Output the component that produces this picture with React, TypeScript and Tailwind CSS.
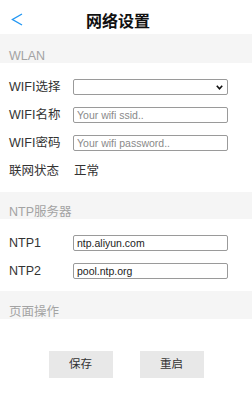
import React from "react";

const FONT = { fontFamily: '"Liberation Sans", "Noto Sans CJK SC", sans-serif' };

function Band({ title, h }: { title: string; h: string }) {
  return (
    <div className={`${h} bg-[#f5f5f5] flex items-end px-[9px]`}>
      <span className="text-[12.5px] leading-[13px] text-[#a3a3a3]">{title}</span>
    </div>
  );
}

function Row({ label, children }: { label: string; children: React.ReactNode }) {
  return (
    <div className="h-[28px] flex items-center pl-[9px]">
      <div className="w-[64px] text-[12.5px] text-[#333]">{label}</div>
      {children}
    </div>
  );
}

function Input({ placeholder, value }: { placeholder?: string; value?: string }) {
  return (
    <input
      className="w-[155px] h-[16px] border border-[#9a9a9a] rounded-[2px] px-[3px] text-[10.5px] text-[#222] placeholder:text-[#8a8a8a] outline-none bg-white"
      style={FONT}
      placeholder={placeholder}
      defaultValue={value}
    />
  );
}

export default function App() {
  return (
    <div className="w-[252px] h-[405px] bg-white" style={FONT}>
      <div className="h-[34px] flex items-start">
        <svg className="ml-[11px] mt-[13px]" width="12" height="13" viewBox="0 0 12 13">
          <polyline points="11,1 1.5,6.5 11,12" fill="none" stroke="#2196f3" strokeWidth="1.4" />
        </svg>
        <div className="ml-[63px] mt-[13px] text-[16px] leading-[18px] font-bold text-[#111]">网络设置</div>
      </div>
      <Band title="WLAN" h="h-[29px]" />
      <div className="pt-[10px] pb-[7px]">
        <Row label="WIFI选择">
          <div className="relative w-[155px] h-[16px] border border-[#9a9a9a] rounded-[2px] bg-white">
            <svg className="absolute right-[4px] top-[5px]" width="7" height="5" viewBox="0 0 7 5">
              <polyline points="0.8,0.8 3.5,3.8 6.2,0.8" fill="none" stroke="#111" strokeWidth="1.6" />
            </svg>
          </div>
        </Row>
        <Row label="WIFI名称">
          <Input placeholder="Your wifi ssid.." />
        </Row>
        <Row label="WIFI密码">
          <Input placeholder="Your wifi password.." />
        </Row>
        <Row label="联网状态">
          <span className="text-[12.5px] text-[#333] ml-[1px]">正常</span>
        </Row>
      </div>
      <Band title="NTP服务器" h="h-[27px]" />
      <div className="pt-[10px] pb-[6px]">
        <Row label="NTP1">
          <Input value="ntp.aliyun.com" />
        </Row>
        <Row label="NTP2">
          <Input value="pool.ntp.org" />
        </Row>
      </div>
      <Band title="页面操作" h="h-[28px]" />
      <div className="mt-[32px] flex justify-center gap-[27px]">
        <button className="w-[64px] h-[27px] bg-[#e8e8e8] text-[11.5px] text-[#333]">保存</button>
        <button className="w-[64px] h-[27px] bg-[#e8e8e8] text-[11.5px] text-[#333]">重启</button>
      </div>
    </div>
  );
}
